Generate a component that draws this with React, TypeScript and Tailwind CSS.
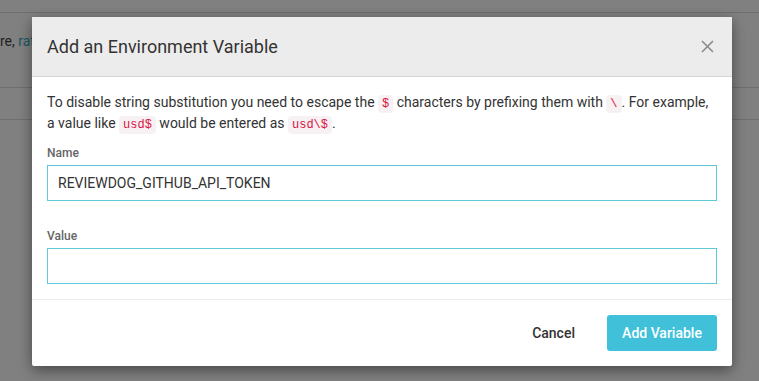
import React from "react";

function Code({ children }: { children: React.ReactNode }) {
  return (
    <code className="rounded-[4px] bg-[#f7f1f3] px-[4px] py-[2px] font-['Liberation_Mono',monospace] text-[12px] leading-[1] text-[#dd1144]">
      {children}
    </code>
  );
}

export default function App() {
  return (
    <div className="relative h-[381px] w-[759px] overflow-hidden bg-[#808080] font-['Roboto',sans-serif]">
      {/* page behind the backdrop */}
      <div className="flex flex-col">
        <div className="h-[13px] border-b border-[#6f6f6f]" />
        <div className="h-[75px] border-b border-[#6f6f6f] pt-[20px] text-[14px] leading-[16px] text-[#1f1f1f]">
          re, <span className="text-[#1c5660]">rate</span>
        </div>
        <div className="h-[32px] border-b border-[#6f6f6f]" />
      </div>

      {/* modal */}
      <div className="absolute left-[32px] top-[17px] flex w-[700px] flex-col rounded-[2px] bg-white shadow-[0_4px_14px_rgba(0,0,0,0.45)]">
        <div className="flex h-[60px] items-center justify-between border-b border-[#d6d6d6] bg-[#ececec] pl-[15px] pr-[18px]">
          <h4 className="text-[18px] leading-[22px] text-[#333333]">Add an Environment Variable</h4>
          <svg width="13" height="13" viewBox="0 0 13 13" className="text-[#8a8a8a]">
            <path d="M1 1 L12 12 M12 1 L1 12" stroke="currentColor" strokeWidth="1.6" />
          </svg>
        </div>
        <div className="flex flex-col px-[15px] pb-[15px] pt-[15px] text-[#333333]">
          <p className="text-[14px] leading-[21px]">
            To disable string substitution you need to escape the <Code>$</Code> characters by prefixing them with <Code>\</Code>. For example, a value like <Code>usd$</Code> would be entered as <Code>usd\$</Code>.
          </p>
          <label className="mt-[10px] text-[12px] font-medium leading-[18px] text-[#666666]">Name</label>
          <div className="mt-[3px] flex h-[36px] items-center border border-[#5fc9dc] px-[10px] text-[14px] text-[#333333]">
            REVIEWDOG_GITHUB_API_TOKEN
          </div>
          <label className="mt-[26px] text-[12px] font-medium leading-[18px] text-[#666666]">Value</label>
          <div className="mt-[3px] h-[36px] border border-[#5fc9dc]" />
        </div>
        <div className="flex items-center justify-end gap-[16px] border-t border-[#ececec] px-[15px] py-[15px]">
          <button className="px-[16px] text-[14px] font-medium leading-[36px] text-[#333333]">Cancel</button>
          <button className="h-[36px] w-[110px] rounded-[3px] bg-[#40c1d9] text-[14px] font-medium text-white">
            Add Variable
          </button>
        </div>
      </div>
    </div>
  );
}
